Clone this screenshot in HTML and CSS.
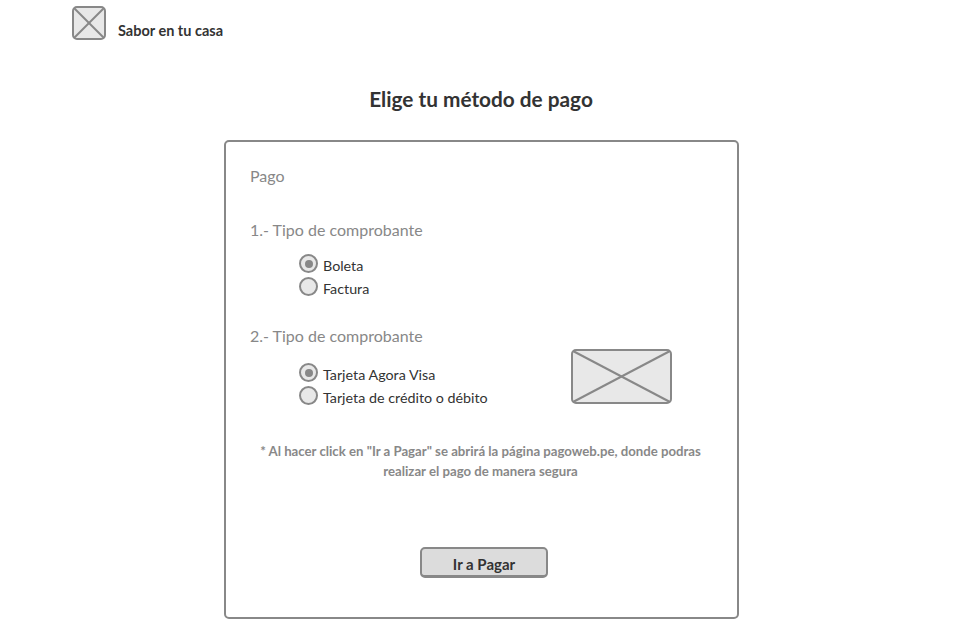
FILE: index.html
```html
<!DOCTYPE html>
<html lang="es">
<head>
<meta charset="utf-8">
<title>Sabor en tu casa - Pago</title>
<link rel="stylesheet" href="styles.css">
</head>
<body>
<header class="topbar">
  <svg class="logo" width="34" height="34" viewBox="0 0 34 34">
    <rect x="1" y="1" width="32" height="32" rx="4" fill="#e8e8e8" stroke="#888" stroke-width="2"/>
    <line x1="2" y1="2" x2="32" y2="32" stroke="#888" stroke-width="2"/>
    <line x1="32" y1="2" x2="2" y2="32" stroke="#888" stroke-width="2"/>
  </svg>
  <span class="brand">Sabor en tu casa</span>
</header>

<h1 class="title">Elige tu método de pago</h1>

<section class="card">
  <div class="card-label">Pago</div>

  <h2 class="section-title first">1.- Tipo de comprobante</h2>
  <div class="radios">
    <label class="radio-row"><span class="radio checked"></span><span class="radio-text">Boleta</span></label>
    <label class="radio-row"><span class="radio"></span><span class="radio-text">Factura</span></label>
  </div>

  <h2 class="section-title second">2.- Tipo de comprobante</h2>
  <div class="pay-row">
    <div class="radios radios-pay">
      <label class="radio-row"><span class="radio checked"></span><span class="radio-text">Tarjeta Agora Visa</span></label>
      <label class="radio-row"><span class="radio"></span><span class="radio-text">Tarjeta de crédito o débito</span></label>
    </div>
    <svg class="placeholder" width="101" height="55" viewBox="0 0 101 55">
      <rect x="1" y="1" width="99" height="53" rx="4" fill="#e8e8e8" stroke="#888" stroke-width="2"/>
      <line x1="2" y1="2" x2="99" y2="53" stroke="#888" stroke-width="2"/>
      <line x1="99" y1="2" x2="2" y2="53" stroke="#888" stroke-width="2"/>
    </svg>
  </div>

  <p class="note">* Al hacer click en "Ir a Pagar" se abrirá la página pagoweb.pe, donde podras<br>realizar el pago de manera segura</p>

  <div class="actions">
    <button class="btn">Ir a Pagar</button>
  </div>
</section>
</body>
</html>
```
FILE: styles.css
```css
* { box-sizing: border-box; }
html, body { margin: 0; padding: 0; background: #fff; }
body {
  font-family: Lato, "Open Sans", "Noto Sans", sans-serif;
  color: #333;
  width: 960px;
  height: 640px;
  overflow: hidden;
}

.topbar {
  display: flex;
  align-items: flex-end;
  padding: 6px 0 0 72px;
  height: 40px;
}
.logo { display: block; }
.brand {
  margin-left: 12px;
  font-weight: 700;
  font-size: 14.5px;
  line-height: 16px;
  color: #333;
  padding-bottom: 1px;
}

.title {
  margin: 45px 0 0 0;
  text-align: center;
  padding-left: 2px;
  font-weight: 700;
  font-size: 20.8px;
  line-height: 28px;
  color: #333;
}

.card {
  width: 515px;
  height: 479px;
  margin: 27px 0 0 224px;
  border: 2px solid #888;
  border-radius: 5px;
  padding: 24px 26px 0 24px;
}

.card-label {
  font-size: 16px;
  line-height: 20px;
  color: #888;
}

.section-title {
  margin: 0;
  font-weight: 400;
  font-size: 16px;
  line-height: 20px;
  color: #888;
}
.section-title.first { margin-top: 34px; }
.section-title.second { margin-top: 28px; }

.radios {
  display: flex;
  flex-direction: column;
  padding-left: 49px;
  margin-top: 12px;
}
.radio-row {
  display: flex;
  align-items: center;
  height: 23px;
  font-size: 14.3px;
  color: #333;
}
.radio-text { padding-top: 3px; }
.radio {
  width: 19px;
  height: 19px;
  border: 2px solid #888;
  border-radius: 50%;
  background: #e8e8e8;
  margin-right: 5px;
  position: relative;
  flex: none;
}
.radio.checked::after {
  content: "";
  position: absolute;
  left: 3.5px;
  top: 3.5px;
  width: 8px;
  height: 8px;
  border-radius: 50%;
  background: #888;
}

.pay-row {
  display: flex;
  align-items: flex-start;
}
.radios-pay { margin-top: 15px; width: 321px; }
.placeholder { display: block; margin-top: 3px; }

.note {
  margin: 34px 0 0 0;
  text-align: center;
  font-weight: 700;
  font-size: 13.2px;
  line-height: 20px;
  color: #888;
  padding-left: 0;
}

.actions {
  display: flex;
  justify-content: center;
  margin-top: 66px;
  padding-left: 7px;
}
.btn {
  width: 128px;
  height: 31px;
  border: 2px solid #888;
  border-bottom-width: 3px;
  border-radius: 5px;
  background: #dcdcdc;
  font-family: Lato, sans-serif;
  font-weight: 700;
  font-size: 15px;
  color: #333;
  padding: 3px 0 0 0;
}
```
